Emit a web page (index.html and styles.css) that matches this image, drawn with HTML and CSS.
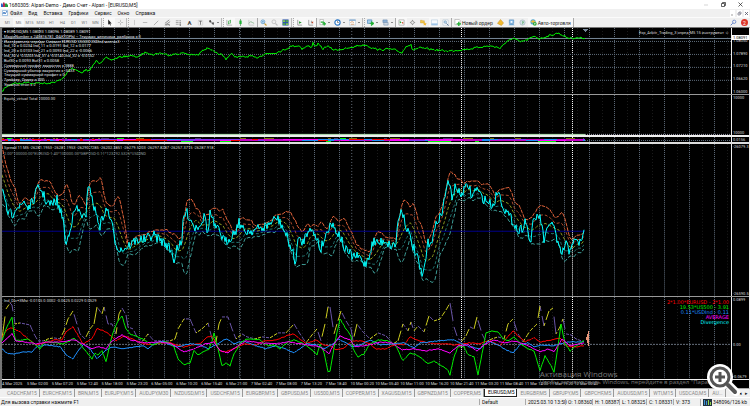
FILE: index.html
```html
<!DOCTYPE html>
<html lang="ru">
<head>
  <meta charset="UTF-8" />
  <meta name="viewport" content="width=device-width, initial-scale=1.0"/>
  <title>Alpari - [EURUSD,M5]</title>
  <link rel="stylesheet" href="styles.css">
</head>
<body>
  <header class="titlebar">
    <svg class="logo" viewBox="0 0 7 6"><path d="M0 5V2l1-1 1 2v2z" fill="#2a62c8"/><path d="M2 5V1l1-1 1 2v3z" fill="#b52a4c"/><path d="M4 5V2l1-1 2 2v2z" fill="#259a3c"/></svg>
    <span class="title">1680305: Alpari-Demo - Демо Счет - Alpari - [EURUSD,M5]</span>
    <div class="win-buttons">
      <button aria-label="Свернуть"><svg viewBox="0 0 5 5"><path d="M0 3h4" stroke="#bbb" stroke-width="0.6"/></svg></button>
      <button aria-label="Развернуть"><svg viewBox="0 0 5 5"><path d="M0.5 1.5h3v3h-3zM1.5 1.5v-1h3v3h-1" fill="none" stroke="#222" stroke-width="0.7"/></svg></button>
      <button aria-label="Закрыть"><svg viewBox="0 0 5 5"><path d="M0.5 0.5l4 4M4.5 0.5l-4 4" stroke="#222" stroke-width="0.7"/></svg></button>
    </div>
  </header>

  <nav class="menu">
    <svg class="logo" viewBox="0 0 7 6"><path d="M0.5 0.5h5v5h-5z" fill="#fff" stroke="#6fa5d8" stroke-width="0.6"/><path d="M1 4l1-2 1 2 2-3" fill="none" stroke="#1f62b5" stroke-width="0.8"/></svg>
    <a href="#">Файл</a>
    <a href="#">Вид</a>
    <a href="#">Вставка</a>
    <a href="#">Графики</a>
    <a href="#">Сервис</a>
    <a href="#">Окно</a>
    <a href="#">Справка</a>
    <div class="mdi-buttons">
      <button aria-label="Свернуть окно"><svg viewBox="0 0 5 5"><path d="M1 4h2" stroke="#777" stroke-width="0.7"/></svg></button>
      <button aria-label="Восстановить окно"><svg viewBox="0 0 5 5"><path d="M1 2h2v2h-2zM2 2v-1h2v2h-1" fill="none" stroke="#667" stroke-width="0.6"/></svg></button>
      <button aria-label="Закрыть окно"><svg viewBox="0 0 5 5"><path d="M1 1l3 3M4 1l-3 3" stroke="#556" stroke-width="0.8"/></svg></button>
    </div>
  </nav>

  <div class="toolbar">
    <button>M1</button><button class="on">M5</button><button>M15</button><button>M30</button><button>H1</button><button>H4</button><button>D1</button><button>W1</button><button>MN</button>
    <i class="grip"></i>
    <button class="on" aria-label="Курсор"><svg viewBox="0 0 8 8"><path d="M2.5 0.5v6l1.3-1.2 1 2.2 0.9-0.4-1-2.1h1.8z" fill="#222"/></svg></button>
    <button aria-label="Перекрестие"><svg viewBox="0 0 8 8"><path d="M4 1v2.4M4 4.6v2.4M1 4h2.4M4.6 4h2.4" stroke="#999" stroke-width="0.6"/></svg></button>
    <i class="grip"></i>
    <button aria-label="Вертикальная линия"><svg viewBox="0 0 8 8"><path d="M4 1v6" stroke="#aaa" stroke-width="0.6"/></svg></button>
    <button aria-label="Горизонтальная линия"><svg viewBox="0 0 8 8"><path d="M1 4h5" stroke="#888" stroke-width="0.6"/></svg></button>
    <button aria-label="Трендовая линия"><svg viewBox="0 0 8 8"><path d="M1 7l5-5" stroke="#777" stroke-width="0.6"/></svg></button>
    <button aria-label="Канал"><svg viewBox="0 0 8 8"><path d="M1 5l5-4M1 7l6-4M2 7l4-1v2" fill="none" stroke="#555" stroke-width="0.7"/></svg></button>
    <button aria-label="Фибоначчи"><svg viewBox="0 0 8 8"><path d="M1 2h6M1 4h6M1 6h4" stroke="#666" stroke-width="0.8" stroke-dasharray="1 0.6"/><path d="M6 5v3" stroke="#444" stroke-width="0.8"/></svg></button>
    <button class="glyph">A</button>
    <button aria-label="Метка"><svg viewBox="0 0 8 8"><path d="M1.5 1.5h5v5.500h-5z" fill="none" stroke="#999" stroke-width="0.5" stroke-dasharray="0.6 0.6"/><path d="M2.500 2.500h3M4 2.500v4" stroke="#555" stroke-width="0.8"/></svg></button>
    <button class="drop" aria-label="Стрелки"><svg viewBox="0 0 8 8"><path d="M1 2l2-1 1 2-2 1zM4 4l3 0-1 3z" fill="#444"/><path d="M2 3l4 3" stroke="#555" stroke-width="0.7"/></svg></button>
    <i class="grip"></i>
    <button class="on" aria-label="Бары"><svg viewBox="0 0 8 8"><path d="M1 1v6h6" fill="none" stroke="#777" stroke-width="0.6"/><path d="M3 2v4M5 1v4M3 5h1M4 2h1" stroke="#1f9a2f" stroke-width="0.8"/></svg></button>
    <button aria-label="Свечи"><svg viewBox="0 0 8 8"><path d="M4 0v8" stroke="#186a22" stroke-width="0.6"/><path d="M2.700 1.800h2.600v4h-2.600z" fill="#1eb335"/></svg></button>
    <button aria-label="Линия"><svg viewBox="0 0 8 8"><path d="M1 1v6h6" fill="none" stroke="#aaa" stroke-width="0.6"/><path d="M1 5l2-2 2 1 2 1" fill="none" stroke="#70ab78" stroke-width="0.8"/></svg></button>
    <i class="line"></i>
    <button aria-label="Увеличить"><svg viewBox="0 0 8 8"><path d="M5 5l2.400 2.400" stroke="#c99b31" stroke-width="1.300"/><circle cx="3.300" cy="3.200" r="2.200" fill="#d6ebfa" stroke="#4d91c6" stroke-width="0.8"/><path d="M2.300 3.200h2M3.300 2.200v2" stroke="#1f6db0" stroke-width="0.5"/></svg></button>
    <button aria-label="Уменьшить"><svg viewBox="0 0 8 8"><path d="M5 5l2.400 2.400" stroke="#bbb" stroke-width="1.300"/><circle cx="3.300" cy="3.200" r="2.200" fill="#eee" stroke="#b5b5b5" stroke-width="0.8"/></svg></button>
    <button aria-label="Окна плиткой"><svg viewBox="0 0 8 8"><path d="M0.500 0.500h7v7h-7z" fill="#2d57a8"/><path d="M1 1.500h2.600v2H1zM4.500 4.800h2.600v2h-2.600z" fill="#82c94b"/><path d="M4.500 1.500h2.600v2h-2.600zM1 4.800h2.600v2H1z" fill="#52a845"/></svg></button>
    <i class="grip"></i>
    <button class="on" aria-label="Автопрокрутка"><svg viewBox="0 0 8 8"><path d="M2 1v6h5" fill="none" stroke="#555" stroke-width="0.6"/><path d="M3.500 2.500l3 1.500-3 1.500z" fill="#23942f"/></svg></button>
    <button class="on" aria-label="Сдвиг графика"><svg viewBox="0 0 8 8"><path d="M2 1v6h5M5 2v3" fill="none" stroke="#555" stroke-width="0.6"/><path d="M7 2.500l-2 1.500 2 1.500z" fill="#c04a2b"/></svg></button>
    <i class="line"></i>
    <button class="drop" aria-label="Индикаторы"><svg viewBox="0 0 8 8"><path d="M1 0.500h4v6h-4z" fill="#fff" stroke="#888" stroke-width="0.5"/><path d="M2 3.500h3.500M4 5.500h4M6 3.500v4" stroke="#1fae31" stroke-width="1.300"/></svg></button>
    <button class="drop" aria-label="Периоды"><svg viewBox="0 0 8 8"><circle cx="4" cy="4" r="3" fill="#fff" stroke="#2573c4" stroke-width="1.300"/><path d="M4 2v2h1.500" fill="none" stroke="#333" stroke-width="0.6"/></svg></button>
    <button class="drop" aria-label="Шаблоны"><svg viewBox="0 0 8 8"><path d="M0.500 1h7v6h-7z" fill="#fff" stroke="#9ab5cf" stroke-width="0.5"/><path d="M0.500 1.300h7" stroke="#4c86c0" stroke-width="1"/><path d="M1.500 4l2-1 2 1M2 6h4" fill="none" stroke="#c77733" stroke-width="0.7"/></svg></button>
    <i class="grip"></i>
    <button class="drop" aria-label="Новый график"><svg viewBox="0 0 8 8"><path d="M0.500 1h5v4h-5z" fill="#a7cdea" stroke="#3a76b4" stroke-width="0.7"/><path d="M3 5h3M5 3l3 2-3 2.500z" fill="#1fae31" stroke="#1fae31"/></svg></button>
    <button class="drop" aria-label="Профили"><svg viewBox="0 0 8 8"><path d="M1 1h5v3h-5z" fill="#8db0d5" stroke="#5a7da2" stroke-width="0.5"/><path d="M2 4h5v3h-5z" fill="#cfd8e2" stroke="#5a7da2" stroke-width="0.5"/></svg></button>
    <i class="line"></i>
    <button class="on" aria-label="Обзор рынка"><svg viewBox="0 0 8 8"><path d="M1 1h6v6h-6z" fill="#fff" stroke="#777" stroke-width="0.5"/><path d="M2 5V2l2 2z" fill="#25a233"/><path d="M6 3v3l-2-2z" fill="#d2532d"/></svg></button>
    <button aria-label="Окно данных"><svg viewBox="0 0 8 8"><path d="M4 1v6M1 4h6" stroke="#777" stroke-width="0.7"/><circle cx="4" cy="4" r="1.800" fill="#eee" stroke="#777" stroke-width="0.7"/></svg></button>
    <button aria-label="Навигатор"><svg viewBox="0 0 8 8"><path d="M0.500 1.500h2l0.500 0.500h2v2.500h-4.500z" fill="#f3c84c" stroke="#b78b24" stroke-width="0.4"/><path d="M5.500 3.500l0.700 1.300 1.500 0.200-1 1 0.200 1.500-1.400-0.700-1.400 0.700 0.300-1.500-1-1 1.400-0.200z" fill="#f4b82c"/></svg></button>
    <button class="on" aria-label="Терминал"><svg viewBox="0 0 8 8"><path d="M0.500 1h7v6h-7z" fill="#f8fbff" stroke="#9ab8d4" stroke-width="0.5"/><path d="M0.500 5h7v2h-7z" fill="#9fc5e8"/></svg></button>
    <button aria-label="Тестер"><svg viewBox="0 0 8 8"><path d="M1 1h6v6h-6z" fill="#fff" stroke="#9ab0c5" stroke-width="0.5"/><circle cx="3.700" cy="3.500" r="1.500" fill="#bcdaf0" stroke="#557ba0" stroke-width="0.5"/><path d="M5 5l2.500 2.500" stroke="#4e6e8e"/></svg></button>
    <i class="line"></i>
    <button class="order"><svg viewBox="0 0 8 8"><path d="M1 0.500h5l1 1v5h-6z" fill="#fff" stroke="#888" stroke-width="0.5"/><path d="M3 5.500h5M5.500 3v5" stroke="#1fae31" stroke-width="1.500"/></svg>Новый ордер</button>
    <button aria-label="MetaEditor"><svg viewBox="0 0 8 8"><path d="M4 0.500l3.500 4-2.500 3-4.500-2.500z" fill="#f0b92e" stroke="#bc8420" stroke-width="0.5"/></svg></button>
    <button aria-label="Сигналы"><svg viewBox="0 0 8 8"><path d="M1.500 1h5v4h-5z" fill="#90c3ed" stroke="#3e7db5" stroke-width="0.6"/><path d="M0.500 7l1.500-1.500h4l1.500 1.500z" fill="#6ba4d3"/><circle cx="4" cy="3.300" r="1.100" fill="#fff"/></svg></button>
    <button aria-label="Маркет"><svg viewBox="0 0 8 8"><circle cx="4" cy="4" r="3" fill="#d5e3e8" stroke="#93a9b5" stroke-width="0.6"/><path d="M4 2l1.500 1.500-1.500 3z" fill="#44a151"/></svg></button>
    <button class="auto on"><svg viewBox="0 0 8 8"><circle cx="3.500" cy="3.300" r="3" fill="#57a7cb"/><path d="M0.500 3l3 1.500 3-1.500-3-2z" fill="#e8bb3e"/><circle cx="5.500" cy="5.500" r="2.200" fill="#2caa35"/><path d="M5 4.400l1.600 1.100-1.600 1.100z" fill="#fff"/></svg>Авто-торговля</button>
    <div class="tool-right">
      <button aria-label="Поиск"><svg viewBox="0 0 8 8"><path d="M3.200 4.800l-2.400 2.400" stroke="#4b71c3"/><circle cx="4.800" cy="3.200" r="1.900" fill="none" stroke="#4b71c3" stroke-width="0.8"/></svg></button>
      <button class="badge">2</button>
    </div>
  </div>

  <main class="terminal">
    <section class="panel p-price">
      <div class="plot">
        <svg id="price" viewBox="2 28 729 66" preserveAspectRatio="none"></svg>
        <div class="comment">
          <span>▾ EURUSD,M5 1.08093 1.08096 1.08089 1.08091</span>
          <span>MagicNumber = 240816781_ФАКТОРЫ – Текущая_величина_разброса = 0</span>
          <span>Инструменты спреда: Символ EURUSD US500 USDInd всего=3</span>
          <span>Ind_10 = 0.0234 Ind_11 = 0.0191 Ind_12 = 0.0177</span>
          <span>Ind_20 = 0.0103 Ind_21 = 0.0093 Ind_22 = -0.0066</span>
          <span>Ind_30 = -0.0203 Ind_31 = -0.0140 Ind_32 = -0.0152</span>
          <span>Buf30 = 0.0093 Buf31 = 0.0058</span>
          <span>Суммарный профит закрытия = 3888</span>
          <span>Суммарный убыток закрытия = -3433</span>
          <span>Текущий суммарный профит = 0</span>
          <span>Tрейдер_Ордер = 300</span>
          <span>Уровень стоп = 2</span>
        </div>
        <div class="expert">Exp_Arbitr_Trading_3 спред M5 15 инструмент ☺</div>
      </div>
      <div class="scale"><span class="last">1.08091</span><span>1.08050</span><span>1.07890</span><span>1.07210</span><span>1.06620</span><span>1.06000</span></div>
    </section>

    <section class="panel p-equity">
      <div class="plot">
        <svg id="equity" viewBox="2 95 729 40" preserveAspectRatio="none"></svg>
        <div class="caption">Equity_virtual Total 10000.00</div>
      </div>
      <div class="scale"><span>10000</span><span>10000</span></div>
    </section>

    <section class="panel p-strip">
      <div class="plot"><svg id="strip" viewBox="2 137 729 5" preserveAspectRatio="none"></svg></div>
      <div class="scale"><span>0.0156</span></div>
    </section>

    <section class="panel p-spread">
      <div class="plot">
        <svg id="spread" viewBox="2 144 729 153" preserveAspectRatio="none"></svg>
        <div class="caption">Spread 11 M5 -26281.1953 -26281.1953 -26290.7285 -26202.3851 -26279.5203 -26297.8287 -26257.3715 -26287.918</div>
        <div class="caption dim">2.00*100000.00*EURUSD-1.40*100000.00*GBPUSD-0.11*123292.5325*USDIND</div>
      </div>
      <div class="scale"><span>-26079.3</span><span>-26590.5</span></div>
    </section>

    <section class="panel p-ind">
      <div class="plot">
        <svg id="ind" viewBox="2 298 729 82" preserveAspectRatio="none"></svg>
        <div class="caption">Ind_Div+3Msi -0.0155 0.0002 -0.0625 0.0229 0.0529</div>
        <div class="legend">
          <span class="c-red">2*1.00*EURUSD - 2*1.00</span>
          <span class="c-green">19.53*US500 - 3.91</span>
          <span class="c-blue">0.11*USDInd - 0.11</span>
          <span class="c-pink">AVERAGE</span>
          <span class="c-cyan">Divergence</span>
        </div>
      </div>
      <div class="scale"><span>0.0899</span><span class="zero">0.00</span><span>-0.0679</span></div>
    </section>

    <div class="times">
      <span>4 Mar 2025</span><span>5 Mar 02:00</span><span>5 Mar 07:20</span><span>5 Mar 12:40</span><span>5 Mar 18:00</span><span>5 Mar 23:20</span><span>6 Mar 05:00</span><span>6 Mar 10:20</span><span>6 Mar 15:40</span><span>6 Mar 21:00</span><span>7 Mar 02:40</span><span>7 Mar 08:00</span><span>7 Mar 13:20</span><span>7 Mar 18:40</span><span>10 Mar 00:20</span><span>10 Mar 05:40</span><span>10 Mar 11:00</span><span>10 Mar 16:20</span><span>10 Mar 21:40</span><span>11 Mar 03:20</span><span>11 Mar 08:40</span><span>11 Mar 14:00</span><span>11 Mar 19:20</span><span>12 Mar 00:40</span>
    </div>

    <div class="activate">
      <strong>Активация Windows</strong>
      <span>Чтобы активировать Windows, перейдите в раздел "Параметры"</span>
    </div>
  </main>

  <nav class="tabs">
    <a href="#">CADCHF,M15</a><a href="#">EURCHF,M15</a><a href="#">BRN,M15</a><a href="#">EURJPY,M15</a><a href="#">AUDJPY,M30</a><a href="#">NZDUSD,M15</a><a href="#">USDCHF,M15</a><a href="#">EURGBP,M15</a><a href="#">GBPUSD,M5</a><a href="#">US500,M15</a><a href="#">COPPER,M15</a><a href="#">XAGUSD,M15</a><a href="#">GBPNZD,M15</a><a href="#">COPPER,M5</a><a href="#" class="active">EURUSD,M5</a><a href="#">EURGBP,M5</a><a href="#">GBPJPY,M5</a><a href="#">GBPCHF,M5</a><a href="#">AUDUSD,M15</a><a href="#">WTI,M15</a><a href="#">USDCAD,M5</a><a href="#">AU...</a>
    <div class="tab-scroll"><button>◂</button><button>▸</button></div>
  </nav>

  <footer class="status">
    <span class="hint">Для вызова справки нажмите F1</span>
    <span class="profile">Default</span>
    <span class="date">2025.03.10 13:50</span>
    <span class="quote">O: 1.08360</span>
    <span class="quote">H: 1.08387</span>
    <span class="quote">L: 1.08325</span>
    <span class="quote">C: 1.08331</span>
    <span class="volume">V: 373</span>
    <span class="net"><svg viewBox="0 0 9 7"><path d="M0 0h9v7H0z" fill="#20313d"/><path d="M1 1h1v5H1zM3 2h1v4H3z" fill="#3f8fd0"/><path d="M5 1h1v5H5zM7 3h1v3H7z" fill="#8fd14b"/></svg>348096/126 kb</span>
  </footer>

  <button class="zoom" aria-label="Увеличить изображение">
    <svg viewBox="0 0 34 34">
      <path d="M22 21l8 8" stroke="#fff" stroke-width="8" stroke-linecap="round"/>
      <circle cx="14" cy="14" r="13" fill="#fff"/>
      <path d="M22 22l7 7" stroke="#555" stroke-width="4" stroke-linecap="round"/>
      <circle cx="14" cy="14" r="9" fill="#fff" stroke="#555" stroke-width="3"/>
      <path d="M9 14h10M14 9v10" stroke="#555" stroke-width="3"/>
    </svg>
  </button>

  <script src="charts.js"></script>
</body>
</html>
```
FILE: styles.css
```css
* {
  box-sizing: border-box;
}
body {
  margin: 0;
  height: 100vh;
  display: flex;
  flex-direction: column;
  background-color: #f0f0f0;
  color: #111;
  font-family: Roboto, "Liberation Sans", sans-serif;
  font-size: 5px;
  line-height: 6px;
  overflow: hidden;
  white-space: nowrap;
}
button {
  margin: 0;
  padding: 0;
  border: none;
  background: none;
  color: inherit;
  font: inherit;
}
a {
  color: inherit;
  text-decoration: none;
}
svg {
  display: block;
}

/* title and menu */
.titlebar {
  display: flex;
  align-items: center;
  height: 9px;
  padding-left: 1px;
  background-color: white;
}
.logo {
  width: 7px;
  height: 6px;
  margin-right: 1px;
}
.win-buttons,
.mdi-buttons,
.tool-right {
  display: flex;
  margin-left: auto;
}
.win-buttons {
  gap: 12px;
  padding-right: 7px;
}
.win-buttons svg,
.mdi-buttons svg {
  width: 5px;
  height: 5px;
}
.menu {
  display: flex;
  align-items: center;
  gap: 6px;
  height: 8px;
  padding-left: 2px;
}
.menu .logo {
  margin-right: -5px;
}
.mdi-buttons {
  gap: 2px;
  padding-right: 1px;
}
.mdi-buttons button {
  background-color: white;
  padding: 1px 0;
}

/* toolbar */
.toolbar {
  display: flex;
  align-items: center;
  height: 10px;
  padding-left: 2px;
  border-top: 1px solid #fbfbfb;
}
.toolbar button {
  display: flex;
  align-items: center;
  justify-content: center;
  flex: none;
  width: 11px;
  height: 9px;
  color: #777;
  font-size: 4px;
}
.toolbar svg {
  width: 7px;
  height: 7px;
}
.toolbar .on {
  background-color: #f8f8f8;
}
.toolbar .glyph {
  color: #444;
  font-size: 6px;
  font-weight: bold;
}
.toolbar .drop {
  width: 15px;
  gap: 2px;
}
.drop::after {
  content: "";
  border: 1px solid transparent;
  border-top-color: #222;
  border-bottom: 0;
}
.grip {
  width: 3px;
  height: 9px;
  border-left: 1px solid #bbb;
  border-right: 1px dotted #aaa;
}
.line {
  width: 1px;
  height: 9px;
  background-color: #aaa;
}
.toolbar .order,
.toolbar .auto {
  gap: 1px;
  width: auto;
  padding: 0 2px;
  color: #111;
  font-family: "Liberation Sans", sans-serif;
  font-size: 5px;
}
.toolbar .auto {
  border-right: 1px solid #aaa;
}
.tool-right {
  align-items: center;
  gap: 2px;
  padding-right: 2px;
}
.toolbar .badge {
  width: 7px;
  height: 7px;
  border-radius: 50%;
  background-color: #dd3629;
  color: white;
  font-size: 5px;
}

/* charts */
.terminal {
  position: relative;
  display: flex;
  flex-direction: column;
  flex: 1;
  min-height: 0;
  border-top: 1px solid #777;
  border-left: 2px solid #777;
  border-right: 1px solid #f0f0f0;
  border-bottom: 1px solid #aaa;
  background-color: black;
  color: #ddd;
  font-size: 4px;
  line-height: 5px;
}
.panel {
  display: flex;
  min-height: 0;
  border-bottom: 1px solid #999;
}
.p-price {
  flex: 66 1 0;
}
.p-equity {
  flex: 40 1 0;
  border-bottom: 2px solid #eee;
}
.p-strip {
  flex: 5 1 0;
  border-bottom: 2px solid #ddd;
}
.p-spread {
  flex: 153 1 0;
}
.p-ind {
  flex: 82 1 0;
  border-bottom-color: #eee;
}
.plot {
  position: relative;
  flex: 1;
  min-width: 0;
  overflow: hidden;
}
.plot svg {
  position: absolute;
  width: 100%;
  height: 100%;
  shape-rendering: crispEdges;
}
.plot path {
  fill: none;
}
.caption,
.comment {
  position: relative;
}
.comment {
  display: flex;
  flex-direction: column;
  justify-content: space-between;
  height: 57px;
  margin-top: 2px;
  padding-left: 2px;
  color: #e4e8ec;
}
.comment span {
  line-height: 4px;
}
.expert {
  position: absolute;
  top: 2px;
  right: 2px;
}
.caption {
  padding: 1px 2px 0;
}
.caption.dim {
  color: #8c9a9a;
}
.legend {
  position: absolute;
  top: 3px;
  right: 2px;
  display: flex;
  flex-direction: column;
  align-items: flex-end;
  font-family: "DejaVu Sans", sans-serif;
  font-size: 5px;
}
.c-red { color: #f00; }
.c-green { color: #0e0; }
.c-blue { color: #1e90ff; }
.c-pink { color: #f0f; }
.c-cyan { color: #0ff; }
.scale {
  position: relative;
  display: flex;
  flex-direction: column;
  justify-content: space-between;
  width: 18px;
  padding-left: 1px;
  border-left: 1px solid #eee;
  color: #ddd;
}
.p-price .scale {
  padding-top: 10px;
}
.scale .last {
  position: absolute;
  top: 7px;
  left: 0;
  right: 0;
  z-index: 1;
  padding-left: 1px;
  background-color: white;
  color: black;
}
.scale .zero {
  padding-top: 12px;
}
.times {
  display: flex;
  flex: none;
  height: 8px;
  line-height: 7px;
}
.times span {
  flex: none;
  width: calc(100% / 30);
}
.activate {
  position: absolute;
  left: 72%;
  bottom: 1px;
  display: flex;
  flex-direction: column;
  color: #777;
  font-family: "Open Sans", sans-serif;
  font-size: 6px;
  line-height: 9px;
}
.activate strong {
  font-size: 8px;
  font-weight: normal;
}

/* chart tabs and status line */
.tabs {
  position: relative;
  display: flex;
  height: 8px;
  padding-left: 4px;
  overflow: hidden;
  color: #888;
  line-height: 8px;
}
.tabs a {
  flex: none;
  padding: 0 2px 0 3px;
  border-right: 1px solid #999;
}
.tabs .active {
  border: 1px solid #222;
  border-top: none;
  background-color: white;
  color: black;
  line-height: 7px;
}
.tab-scroll {
  position: absolute;
  right: 0;
  display: flex;
  gap: 3px;
  padding: 0 2px;
  background-color: #f0f0f0;
  color: #222;
}
.status {
  display: flex;
  align-items: center;
  height: 9px;
  padding-left: 1px;
  border-top: 1px solid #fff;
}
.hint {
  flex: 1;
}
.status span + span {
  padding-left: 2px;
  border-left: 1px solid #aaa;
}
.profile {
  width: 46px;
}
.date {
  width: 40px;
}
.quote {
  width: 27px;
}
.volume {
  width: 27px;
}
.net {
  display: flex;
  align-items: center;
  gap: 1px;
  width: 50px;
}
.net svg {
  width: 9px;
  height: 7px;
}
.zoom {
  position: absolute;
  right: 10px;
  bottom: 9px;
}
.zoom svg {
  width: 34px;
  height: 34px;
}
```
FILE: charts.js
```js
const NS = "http://www.w3.org/2000/svg";

// small seeded generator so that the noise is the same on every load
let seed = 7;
function rnd() {
  seed = (seed * 16807) % 2147483647;
  return seed / 2147483647 - 0.5;
}

function add(svg, d, color, width, dash) {
  const p = document.createElementNS(NS, "path");
  p.setAttribute("d", d);
  p.setAttribute("stroke", color);
  p.setAttribute("stroke-width", width || 1);
  if (dash) p.setAttribute("stroke-dasharray", dash);
  svg.appendChild(p);
}

// "x,y x,y ..." -> one value per pixel column
function expand(text, noise) {
  const pts = text.trim().split(/\s+/).map(s => s.split(",").map(Number));
  const out = [];
  for (let i = 0; i < pts.length - 1; i++) {
    const [x1, y1] = pts[i];
    const [x2, y2] = pts[i + 1];
    for (let x = x1; x < x2; x++) {
      out.push([x, y1 + (y2 - y1) * (x - x1) / (x2 - x1) + rnd() * noise]);
    }
  }
  out.push(pts[pts.length - 1]);
  return out;
}
const toPath = pts => "M" + pts.map(p => p[0] + " " + p[1].toFixed(1)).join("L");

function grid(svg, top, bottom) {
  for (let x = 2.5; x < 731; x += 25) {
    add(svg, `M${x} ${top}V${bottom}`, "#1c1c1c", 1, "1 2");
    add(svg, `M${x + 12} ${top}V${bottom}`, "#5e6b7a", 1, "1 1");
  }
  [128.5, 240.5, 351.5].forEach(x => add(svg, `M${x} ${top}V${bottom}`, "#4a525c", 1, "1 2"));
  [461.5, 572.5].forEach(x => add(svg, `M${x} ${top}V${bottom}`, "#fff", 1, "1 1"));
}

// price
const price = document.getElementById("price");
grid(price, 28, 94);
[41.5, 54.5, 67.5, 80.5].forEach(y => add(price, `M2 ${y}H731`, "#5e6b7a", 1, "1 1"));
add(price, "M2 38.5H731", "#778899");
add(price, toPath(expand(`2,92 5,88 10,85 14,83 20,84 28,82 33,84 40,83 48,84 55,82 61,80 65,76 68,71 72,68 76,70 81,73 86,70
  88,72 92,67 97,60 99,63 103,61 106,58 112,60 120,57 130,56 139,57 142,54 147,52 152,55 160,53 168,55 178,54 184,53 190,55
  199,55 202,50 209,48 215,53 222,55 226,59 231,54 236,57 246,57 250,56 256,58 265,54 275,53 284,50 292,46 300,46 302,49
  308,46 312,47 313,42 315,47 318,44 323,49 327,46 334,50 344,49 351,48 356,46 366,45 372,48 380,50 388,49 395,50 402,53 406,46
  411,45 412,50 420,48 428,49 436,50 445,51 450,51 460,50 470,49 480,47 490,46 500,48 504,44 510,40 513,38 520,42 527,40 535,36
  539,39 545,37 552,35 558,33 564,36 568,38 585,38`, 2)), "#0e0", 1);
const mark = document.createElementNS(NS, "polygon");
mark.setAttribute("points", "583,29 588,29 585.500,32");
mark.setAttribute("fill", "#778899");
price.appendChild(mark);

// virtual equity
const equity = document.getElementById("equity");
grid(equity, 95, 135);
add(equity, "M2 134.500H585", "#bff0bf");
add(equity, "M585 134.500H731", "#99a", 1, "1 1");

// squeezed indicator window
const strip = document.getElementById("strip");
grid(strip, 137, 142);
const hues = ["#f0f", "#f00", "#1e90ff", "#c0c", "#c0c", "#83f"];
for (let x = 2; x < 585;) {
  const w = Math.min(585 - x, x < 100 ? 3 : 6 + Math.round((rnd() + 0.5) * 14));
  add(strip, `M${x} 139.500h${w}`, hues[Math.floor((rnd() + 0.5) * 6)]);
  add(strip, `M${x} 140.500h${w}`, hues[Math.floor((rnd() + 0.5) * 6)]);
  if (rnd() > 0.1) add(strip, `M${x} 138.500h${Math.round(w / 2)}`, rnd() > 0 ? "#77770c" : "#453a66");
  x += w;
}
[[7, 12], [117, 124], [340, 346]].forEach(r => add(strip, `M${r[0]} 138.500H${r[1]}`, "#0e0"));
[[181, 193], [220, 231], [326, 331], [428, 451], [475, 479], [538, 556]].forEach(r => add(strip, `M${r[0]} 141.500H${r[1]}`, "#0e0"));
[[220, 231], [428, 452], [538, 556]].forEach(r => add(strip, `M${r[0]} 140.500H${r[1]}`, "#f0f"));
add(strip, "M585 140.500H731", "#5e6b7a", 1, "1 1");

// spread with its bands
const spread = document.getElementById("spread");
grid(spread, 144, 297);
add(spread, "M2 231.500H585", "#00008b");
const line = expand(`2,190 5,204 8,213 12,216 16,206 20,208 24,201 28,208 33,202 37,190 40,188 43,194 47,203 52,205 57,200
  60,212 63,216 65,240 66,246 69,232 72,220 76,208 79,212 83,216 86,220 88,183 90,186 92,200 96,214 100,226 104,214 108,210
  111,222 116,244 120,250 126,248 130,245 137,240 145,240 153,235 160,240 168,246 173,255 174,262 177,247 182,245 183,220
  186,212 190,218 195,228 200,224 205,216 208,235 210,212 215,228 220,232 225,243 230,238 236,230 239,222 244,232 250,231
  260,229 267,226 277,218 282,226 288,240 293,254 295,265 298,240 302,243 306,236 310,225 314,236 318,240 320,250 323,243
  328,230 330,222 335,229 340,236 345,250 352,256 360,258 365,265 369,256 373,242 380,243 385,240 390,246 396,244 398,220
  402,209 405,222 410,238 415,252 419,264 422,278 424,270 428,244 433,238 438,218 442,215 446,188 449,184 452,196 456,186
  460,196 464,190 469,186 472,198 476,188 482,198 488,202 493,206 498,190 501,200 505,210 510,218 514,222 518,232 522,228
  526,220 530,244 533,225 538,214 541,222 544,240 548,230 552,220 555,232 559,250 562,254 566,244 569,252 572,242 577,243
  581,242 584,230`, 10);
function band(k) {
  return line.map((p, i) => {
    const part = line.slice(Math.max(0, i - 13), i + 1).map(q => q[1]);
    if (i < 13) for (let j = i; j < 13; j++) part.push(150 + j * 4);
    const avg = part.reduce((a, b) => a + b, 0) / part.length;
    const dev = Math.sqrt(part.reduce((a, b) => a + (b - avg) * (b - avg), 0) / part.length);
    return [p[0], avg - dev * k];
  });
}
add(spread, toPath(band(2)), "#e0623a", 1, "4 1");
add(spread, toPath(band(1)), "#a84a2c", 1, "3 2");
add(spread, toPath(band(0)), "#8a9a20", 1, "3 2");
add(spread, toPath(band(-1)), "#1f6f6c", 1, "3 2");
add(spread, toPath(band(-2)), "#3c9c96", 1, "4 2");
add(spread, toPath(line), "#0ff", 1);

// divergence indicators
const ind = document.getElementById("ind");
grid(ind, 298, 380);
add(ind, "M2 345.500H731", "#66707c", 1, "2 1");
const div = expand(`2,340 6,310 10,304 12,306 15,325 20,324 25,325 30,326 34,335 38,342 44,342 48,340 54,339 60,340 64,332
  68,320 73,312 76,322 80,335 85,340 90,330 94,325 97,308 102,315 104,308 108,325 112,325 116,335 119,315 122,309 126,316
  128,328 133,330 138,340 143,342 148,335 154,342 162,342 170,342 175,340 178,330 184,320 190,320 196,334 202,330 208,324
  212,340 216,343 219,325 222,318 228,318 232,330 236,340 242,335 247,338 255,340 262,338 270,339 278,334 286,334 294,325
  300,335 306,344 312,336 317,330 321,342 325,325 328,308 330,308 334,335 337,325 341,312 346,322 351,330 353,342 357,325
  362,332 370,340 378,334 386,337 393,345 398,342 403,325 408,332 411,323 414,332 418,327 424,333 429,317 434,322 440,320
  446,311 450,304 454,328 458,340 462,342 466,337 470,328 474,330 477,318 482,335 486,343 492,340 498,338 504,340 508,325
  513,320 518,335 523,343 530,332 537,325 540,307 544,327 549,312 553,309 556,335 560,328 563,320 566,335 571,336 576,340
  584,343`, 0);
let up = "", down = "";
for (let i = 1; i < div.length; i++) {
  if (i % 4 === 0) continue;
  const s = `M${div[i - 1]}L${div[i]}`;
  if (div[i][1] < div[i - 1][1]) up += s; else down += s;
}
add(ind, down, "#6a55a8");
add(ind, up, "#cfcf20");
add(ind, toPath(expand(`2,338 8,330 12,329 20,333 28,340 36,346 44,344 54,341 62,341 66,333 73,328 78,336 83,345 88,342 92,340
  97,330 104,332 110,336 116,342 124,337 134,341 144,345 154,346 160,344 170,344 176,346 184,348 192,346 200,345 206,339
  212,337 216,345 220,352 226,353 234,350 244,345 256,346 264,342 276,341 286,337 294,335 300,340 306,345 316,341 324,346
  330,347 336,351 344,349 352,342 362,342 370,345 376,350 386,350 396,345 404,346 410,338 416,341 428,344 436,345 446,345
  454,346 462,345 470,344 478,345 490,342 500,347 506,340 513,332 518,337 525,343 534,339 540,343 552,341 560,339 566,347
  574,348 584,347`, 1)), "#f00");
add(ind, toPath(expand(`2,350 8,355 14,355 24,353 32,353 36,348 46,346 60,348 66,356 73,360 78,352 84,345 90,350 97,360 104,353
  112,348 124,350 134,348 144,347 148,350 154,345 162,342 170,346 178,348 190,345 200,346 208,350 216,346 222,342 227,340
  234,345 244,342 256,347 266,350 276,347 286,350 294,354 300,350 306,345 316,346 324,350 332,346 338,340 346,344 352,348
  362,345 370,341 380,346 392,345 404,344 414,349 420,344 430,343 440,342 454,341 462,345 470,348 480,350 488,342 498,346
  506,351 513,354 520,346 528,344 534,348 542,346 552,347 562,345 568,343 584,343`, 1)), "#1e90ff");
add(ind, toPath(expand(`2,342 6,330 12,318 14,335 16,342 24,341 28,340 34,345 40,350 46,342 55,344 62,345 70,342 74,339 80,345
  84,350 88,355 92,360 95,354 98,356 102,352 106,363 110,345 113,334 118,322 122,317 126,330 130,335 138,338 146,342 152,346
  160,344 168,343 174,348 178,360 184,366 190,364 194,352 198,356 204,353 209,350 212,342 214,334 218,350 222,367 226,364
  230,367 234,355 240,345 246,340 250,340 260,341 268,347 274,346 280,350 288,343 294,341 302,344 308,348 313,352 317,356
  320,345 324,354 328,373 330,373 333,355 336,338 340,320 346,330 351,337 353,350 358,358 364,355 370,345 378,341 388,342
  396,347 400,356 403,362 410,354 416,356 422,360 428,365 434,362 440,366 447,370 450,376 454,358 458,348 464,348 468,356
  474,358 478,376 482,355 486,334 492,332 498,333 503,340 508,342 514,338 522,346 528,350 534,352 540,372 545,357 550,365
  554,373 558,348 561,325 565,345 570,352 576,347 584,342`, 1)), "#0e0");
add(ind, toPath(expand(`2,344 12,335 16,342 24,343 36,345 48,343 62,343 74,341 84,346 92,350 98,348 106,350 112,342 122,336
  130,341 144,344 160,343 172,345 184,353 194,350 206,345 214,343 220,352 228,354 238,347 246,342 260,344 276,345 288,343
  306,346 320,348 329,355 334,345 340,337 350,341 355,348 370,346 380,343 392,344 402,351 414,350 426,352 438,350 450,354
  458,347 468,346 477,352 484,346 494,341 505,344 514,342 526,346 540,353 548,350 554,353 562,340 570,347 584,344`, 1)), "#f0f");
const arrow = document.createElementNS(NS, "polygon");
arrow.setAttribute("points", "586,340 589,331 589,348");
arrow.setAttribute("fill", "#e9967a");
ind.appendChild(arrow);
```
